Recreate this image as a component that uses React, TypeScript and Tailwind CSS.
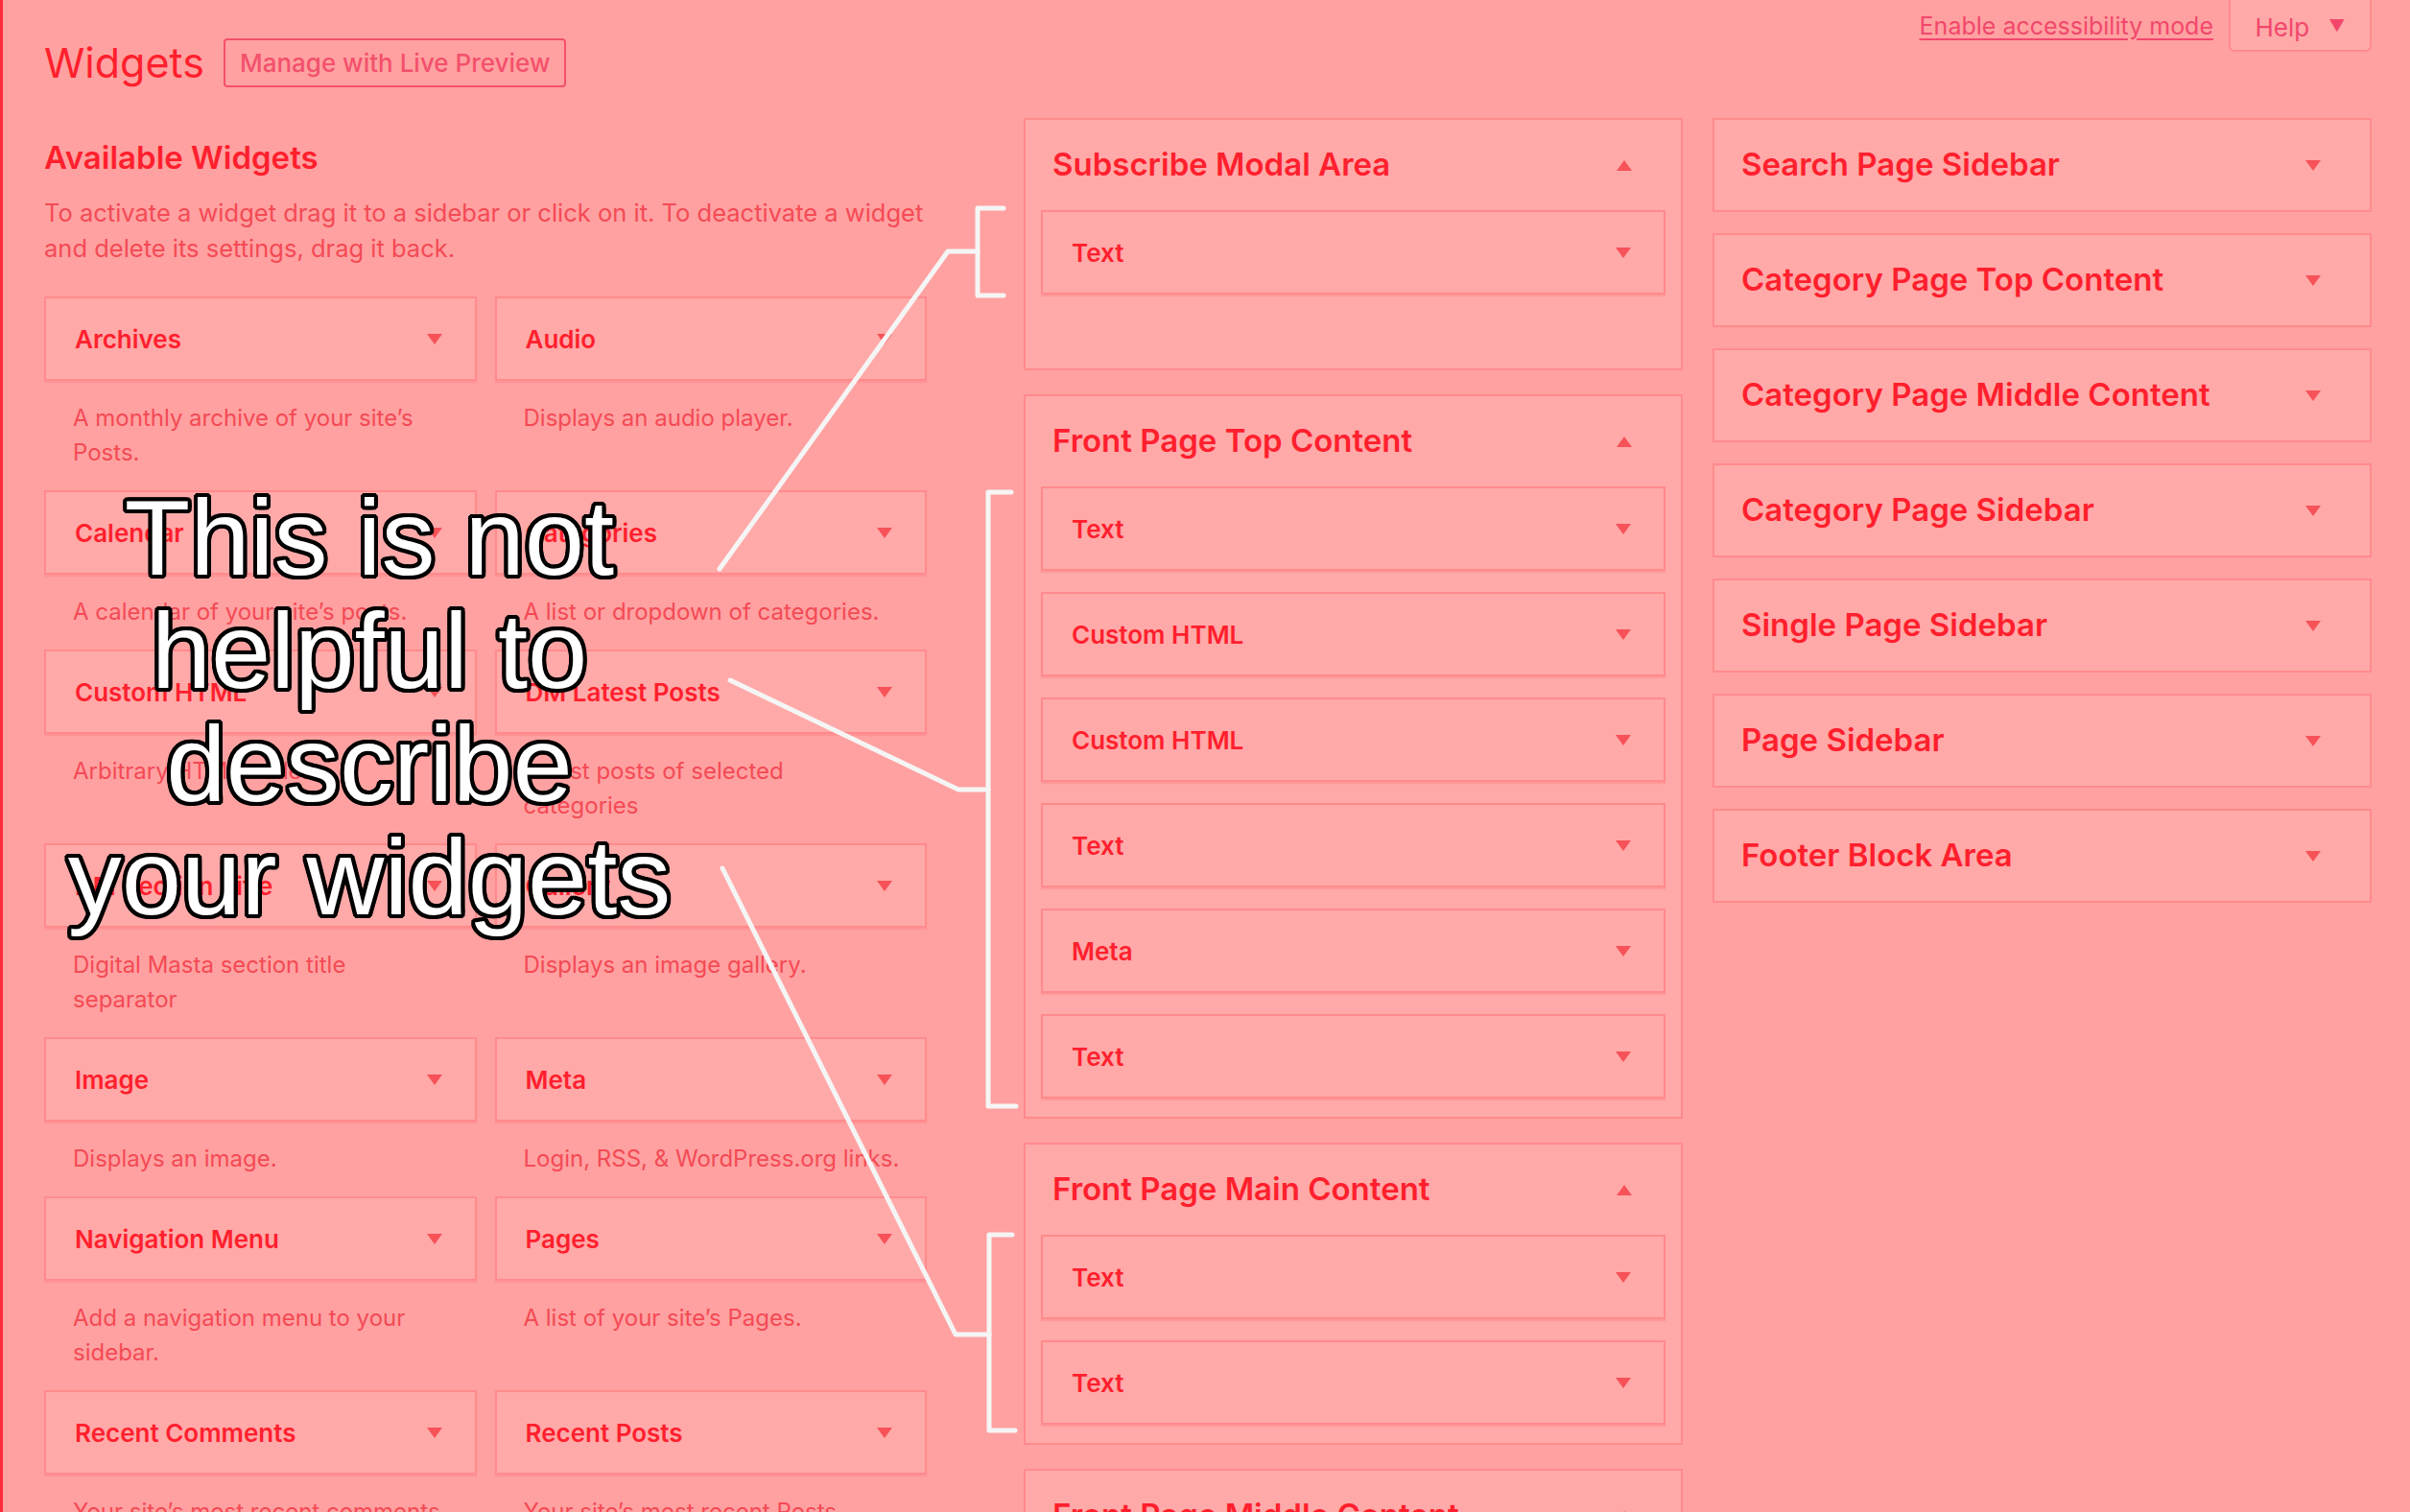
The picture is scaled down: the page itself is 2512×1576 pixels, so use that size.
import React from 'react';

type Item = { title: string; desc: string[] };

const available: Item[] = [
  { title: 'Archives', desc: ['A monthly archive of your site’s', 'Posts.'] },
  { title: 'Audio', desc: ['Displays an audio player.'] },
  { title: 'Calendar', desc: ['A calendar of your site’s posts.'] },
  { title: 'Categories', desc: ['A list or dropdown of categories.'] },
  { title: 'Custom HTML', desc: ['Arbitrary HTML code.'] },
  { title: 'DM Latest Posts', desc: ['Latest posts of selected', 'categories'] },
  { title: 'DM Section Title', desc: ['Digital Masta section title', 'separator'] },
  { title: 'Gallery', desc: ['Displays an image gallery.'] },
  { title: 'Image', desc: ['Displays an image.'] },
  { title: 'Meta', desc: ['Login, RSS, & WordPress.org links.'] },
  { title: 'Navigation Menu', desc: ['Add a navigation menu to your', 'sidebar.'] },
  { title: 'Pages', desc: ['A list of your site’s Pages.'] },
  { title: 'Recent Comments', desc: ['Your site’s most recent comments.'] },
  { title: 'Recent Posts', desc: ['Your site’s most recent Posts.'] },
  { title: 'RSS', desc: ['Entries from any RSS or Atom feed.'] },
  { title: 'Search', desc: ['A search form for your site.'] },
];

const openAreas = [
  { name: 'Subscribe Modal Area', widgets: ['Text'], roomy: true },
  { name: 'Front Page Top Content', widgets: ['Text', 'Custom HTML', 'Custom HTML', 'Text', 'Meta', 'Text'] },
  { name: 'Front Page Main Content', widgets: ['Text', 'Text'] },
  { name: 'Front Page Middle Content', widgets: ['Text', 'Text'] },
];

const closedAreas = [
  'Search Page Sidebar',
  'Category Page Top Content',
  'Category Page Middle Content',
  'Category Page Sidebar',
  'Single Page Sidebar',
  'Page Sidebar',
  'Footer Block Area',
];

const Caret = ({ up }: { up?: boolean }) => (
  <svg width="16" height="11" viewBox="0 0 16 11" className="shrink-0">
    <polygon points={up ? '0,11 16,11 8,0' : '0,0 16,0 8,11'} fill="#f65258" />
  </svg>
);

const WidgetBar = ({ title }: { title: string }) => (
  <div className="h-[88px] flex items-center justify-between border-2 border-[#ff8a8c] bg-[#ffa9a9] pl-[30px] pr-[34px] shadow-[0_2px_1px_rgba(255,120,125,0.35)]">
    <span className="text-[26px] font-semibold text-[#ff1f2d]">{title}</span>
    <Caret />
  </div>
);

const AreaHeader = ({ name, up }: { name: string; up?: boolean }) => (
  <div className="h-[94px] flex items-center justify-between pl-[28px] pr-[51px]">
    <h2 className="text-[33px] font-semibold text-[#ff1f2d]">{name}</h2>
    <Caret up={up} />
  </div>
);

const shadowText =
  '[text-shadow:4px_0_0_#000,-4px_0_0_#000,0_4px_0_#000,0_-4px_0_#000,3px_3px_0_#000,-3px_3px_0_#000,3px_-3px_0_#000,-3px_-3px_0_#000,4px_2px_0_#000,4px_-2px_0_#000,-4px_2px_0_#000,-4px_-2px_0_#000,2px_4px_0_#000,-2px_4px_0_#000,2px_-4px_0_#000,-2px_-4px_0_#000]';

export default function App() {
  return (
    <div className="relative w-[2512px] h-[1576px] overflow-hidden bg-[#ffa1a1] shadow-[inset_3px_0_0_#ff2a3a] pl-[46px] pr-[40px] font-['Inter',sans-serif]">
      {/* header */}
      <div className="flex items-start justify-between">
        <div className="flex items-center gap-[20px] pt-[40px]">
          <h1 className="text-[43px] leading-[51px] text-[#ff1f2d]">Widgets</h1>
          <button className="h-[51px] px-[15px] border-2 border-[#f4506c] rounded-[4px] text-[26px] font-medium text-[#f4506c]">
            Manage with Live Preview
          </button>
        </div>
        <div className="flex items-start gap-[16px]">
          <a className="mt-[9px] text-[25px] leading-[36px] text-[#f2476b] underline underline-offset-[4px]">
            Enable accessibility mode
          </a>
          <div className="h-[54px] w-[149px] pt-[4px] border-2 border-t-0 border-[#ff8a8c] rounded-b-[6px] bg-[#ffa9a9] flex items-center justify-center gap-[20px] text-[26px] text-[#f2476b]">
            <span>Help</span>
            <span className="text-[17px]">▼</span>
          </div>
        </div>
      </div>

      {/* columns */}
      <div className="flex items-start mt-[32px]">
        <div className="w-[920px] pt-[21px]">
          <h2 className="text-[33px] leading-[40px] font-semibold text-[#ff1f2d]">Available Widgets</h2>
          <p className="mt-[19px] text-[25.5px] leading-[37px] text-[#f44a55]">
            To activate a widget drag it to a sidebar or click on it. To deactivate a widget and delete its settings, drag it back.
          </p>
          <div className="mt-[32px] grid grid-cols-2 gap-x-[19px]">
            {available.map((w) => (
              <div key={w.title}>
                <WidgetBar title={w.title} />
                <div className="pl-[30px] pr-[10px] py-[21px] text-[24px] leading-[36px] text-[#f44a55]">
                  {w.desc.map((l) => (
                    <div key={l} className="whitespace-nowrap">{l}</div>
                  ))}
                </div>
              </div>
            ))}
          </div>
        </div>

        <div className="w-[687px] ml-[101px] flex flex-col gap-[25px]">
          {openAreas.map((a) => (
            <div key={a.name} className="border-2 border-[#ff8a8c] bg-[#ffa9a9]">
              <AreaHeader name={a.name} up />
              <div className={`px-[16px] pb-[19px] flex flex-col gap-[22px] ${a.roomy ? 'min-h-[165px]' : ''}`}>
                {a.widgets.map((t, i) => (
                  <WidgetBar key={i} title={t} />
                ))}
              </div>
            </div>
          ))}
        </div>

        <div className="w-[687px] ml-[31px] flex flex-col gap-[22px]">
          {closedAreas.map((n) => (
            <div key={n} className="border-2 border-[#ff8a8c] bg-[#ffa9a9]">
              <AreaHeader name={n} />
            </div>
          ))}
        </div>
      </div>

      {/* annotation */}
      <svg
        className="absolute left-0 top-0 pointer-events-none"
        width="2512"
        height="1576"
        viewBox="0 0 2512 1576"
        fill="none"
        stroke="#f5f5f5"
        strokeWidth="5"
        strokeLinecap="round"
        strokeLinejoin="round"
      >
        <path d="M750 593 L988 262 H1019" />
        <path d="M1046 217 H1019 V308 H1046" />
        <path d="M761 709 L999 823 H1030" />
        <path d="M1054 513 H1030 V1153 H1059" />
        <path d="M753 905 L996 1391 H1031" />
        <path d="M1055 1287 H1031 V1491 H1058" />
      </svg>
      <div
        className={`absolute left-[35px] top-[502px] w-[700px] text-center text-[112px] leading-[118px] text-white font-['Liberation_Sans',Arial,sans-serif] ${shadowText}`}
      >
        <div>This is not</div>
        <div>helpful to</div>
        <div>describe</div>
        <div>your widgets</div>
      </div>
    </div>
  );
}
